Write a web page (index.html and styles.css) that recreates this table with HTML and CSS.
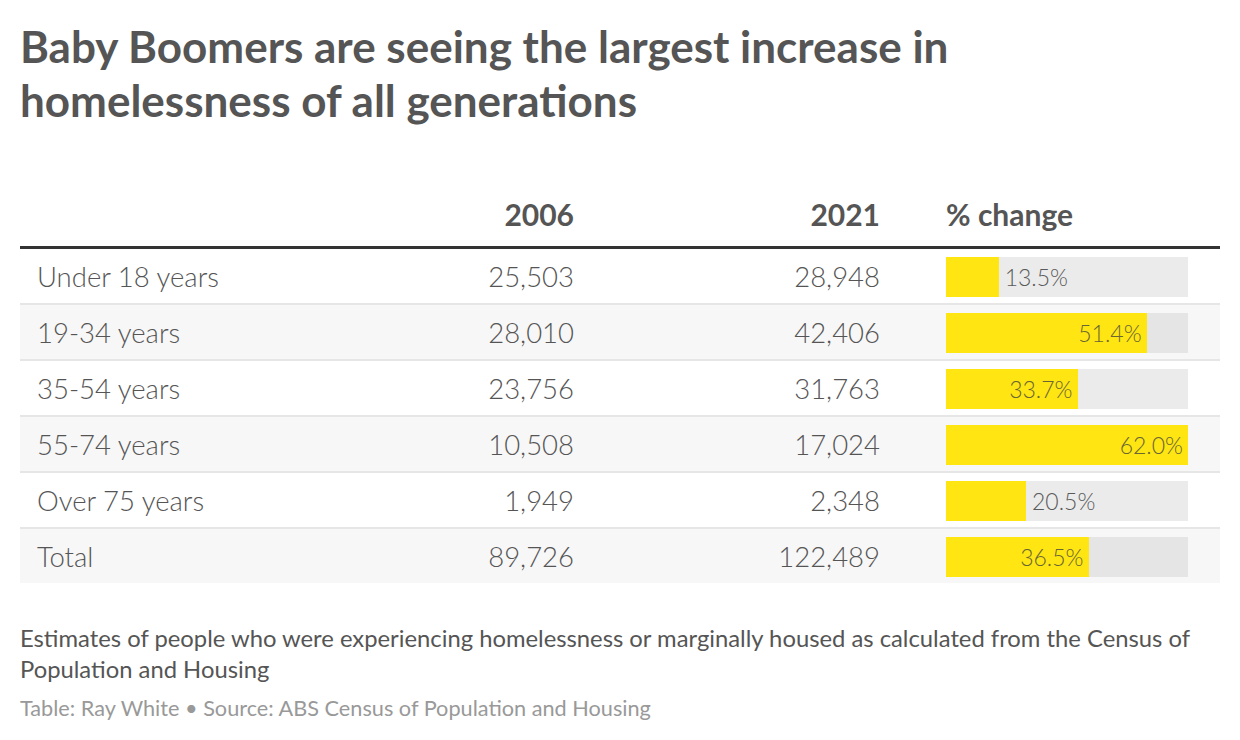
FILE: index.html
```html
<!DOCTYPE html>
<html lang="en">
<head>
<meta charset="utf-8">
<title>Baby Boomers homelessness</title>
<link rel="stylesheet" href="styles.css">
</head>
<body>
<div class="chart">
  <h1 class="title">Baby Boomers are seeing the largest increase in homelessness of all generations</h1>
  <div class="table">
    <div class="row head">
      <div class="cell label"></div>
      <div class="cell num">2006</div>
      <div class="cell num">2021</div>
      <div class="cell bar-head">% change</div>
    </div>
    <div class="row">
      <div class="cell label">Under 18 years</div>
      <div class="cell num">25,503</div>
      <div class="cell num">28,948</div>
      <div class="cell barcell"><div class="bar"><div class="fill" style="width:52.7px"></div><span class="val out">13.5%</span></div></div>
    </div>
    <div class="row alt">
      <div class="cell label">19-34 years</div>
      <div class="cell num">28,010</div>
      <div class="cell num">42,406</div>
      <div class="cell barcell"><div class="bar"><div class="fill" style="width:200.6px"><span class="val in">51.4%</span></div></div></div>
    </div>
    <div class="row">
      <div class="cell label">35-54 years</div>
      <div class="cell num">23,756</div>
      <div class="cell num">31,763</div>
      <div class="cell barcell"><div class="bar"><div class="fill" style="width:131.5px"><span class="val in">33.7%</span></div></div></div>
    </div>
    <div class="row alt">
      <div class="cell label">55-74 years</div>
      <div class="cell num">10,508</div>
      <div class="cell num">17,024</div>
      <div class="cell barcell"><div class="bar"><div class="fill" style="width:242px"><span class="val in">62.0%</span></div></div></div>
    </div>
    <div class="row">
      <div class="cell label">Over 75 years</div>
      <div class="cell num">1,949</div>
      <div class="cell num">2,348</div>
      <div class="cell barcell"><div class="bar"><div class="fill" style="width:80px"></div><span class="val out">20.5%</span></div></div>
    </div>
    <div class="row alt last">
      <div class="cell label">Total</div>
      <div class="cell num">89,726</div>
      <div class="cell num">122,489</div>
      <div class="cell barcell"><div class="bar"><div class="fill" style="width:142.5px"><span class="val in">36.5%</span></div></div></div>
    </div>
  </div>
  <p class="note">Estimates of people who were experiencing homelessness or marginally housed as calculated from the Census of Population and Housing</p>
  <p class="source">Table: Ray White • Source: ABS Census of Population and Housing</p>
</div>
</body>
</html>
```

FILE: styles.css
```css
html, body {
  margin: 0;
  padding: 0;
  background: #ffffff;
}

body {
  font-family: Lato, "Open Sans", sans-serif;
  color: #505050;
}

.chart {
  padding: 19px 20px 0 20px;
}

.title {
  margin: 0;
  font-size: 44px;
  line-height: 54px;
  font-weight: 700;
  color: #555555;
  letter-spacing: 0;
  max-width: 980px;
}

.table {
  margin-top: 54px;
  display: flex;
  flex-direction: column;
}

.row {
  display: grid;
  grid-template-columns: 354px 200px 306px 66px 242px 32px;
  height: 54px;
  align-items: center;
  border-bottom: 2px solid #e6e6e6;
}

.row.alt {
  background: #f7f7f7;
}

.row.last {
  border-bottom: none;
}

.row.head {
  height: 65px;
  border-bottom: 3px solid #333333;
  align-items: end;
}

.cell {
  font-size: 27.5px;
  font-weight: 300;
  color: #555555;
}

.label {
  padding-left: 17px;
}

.num {
  text-align: right;
}

.head .cell {
  font-weight: 700;
  font-size: 30px;
  padding-bottom: 14px;
}

.bar-head {
  grid-column: 5;
}

.barcell {
  grid-column: 5;
  padding-top: 2px;
}

.bar {
  height: 40px;
  width: 242px;
  background: #ebebeb;
  display: flex;
  align-items: center;
}

.alt .bar {
  background: #e5e5e5;
}

.fill {
  height: 40px;
  background: #ffe512;
  display: flex;
  align-items: center;
  justify-content: flex-end;
  flex-shrink: 0;
}

.val {
  font-size: 23px;
  font-weight: 300;
  color: #5a5a5a;
}

.val.in {
  padding-right: 5px;
  color: #6a6532;
}

.val.out {
  padding-left: 6px;
}

.note {
  margin: 40px 0 0 0;
  font-size: 23.8px;
  line-height: 31px;
  color: #555555;
  font-weight: 400;
}

.source {
  margin: 9px 0 0 0;
  font-size: 21.7px;
  line-height: 28px;
  color: #999999;
  font-weight: 400;
}
```
